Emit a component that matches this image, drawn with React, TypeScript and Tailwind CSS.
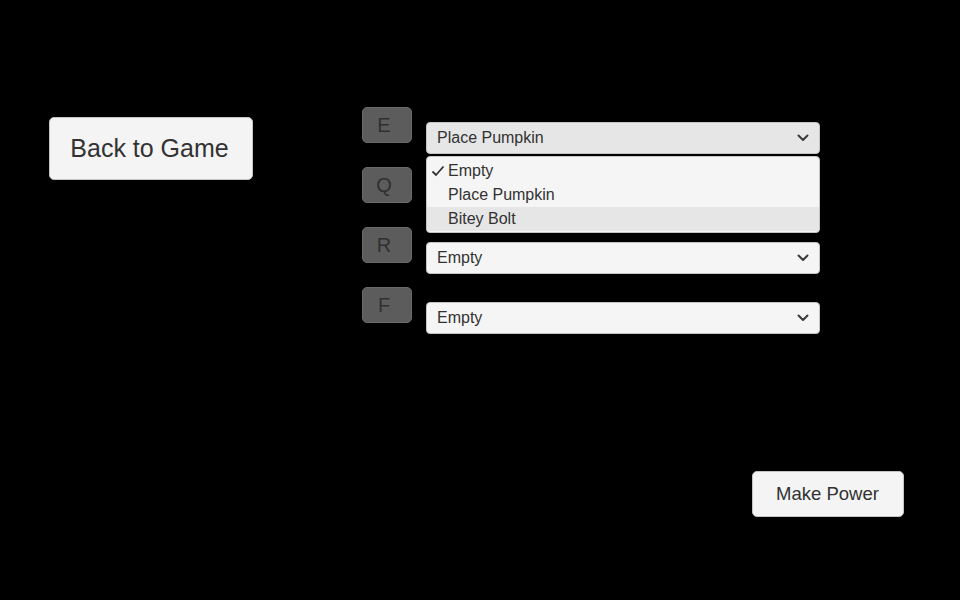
import React from "react";

const KEYS = [
  { key: "E", value: "Place Pumpkin", open: true },
  { key: "Q", value: "Empty", open: false },
  { key: "R", value: "Empty", open: false },
  { key: "F", value: "Empty", open: false },
];

const OPTIONS = ["Empty", "Place Pumpkin", "Bitey Bolt"];

function Chevron() {
  return (
    <svg width="12" height="8" viewBox="0 0 12 8" className="shrink-0">
      <path d="M1.5 1.5 L6 6 L10.5 1.5" fill="none" stroke="#3a3a3a" strokeWidth="2" strokeLinecap="round" strokeLinejoin="round" />
    </svg>
  );
}

function Dropdown({ value, open }: { value: string; open: boolean }) {
  return (
    <div className="relative mt-[15px] w-[394px]">
      <div
        className={`flex h-8 items-center justify-between rounded-[4px] border border-[#c4c4c4] pl-[10px] pr-[10px] text-[16px] text-[#323232] ${
          open ? "bg-[#e6e6e6]" : "bg-[#f5f5f5]"
        }`}
      >
        <span>{value}</span>
        <Chevron />
      </div>
      {open && (
        <div className="absolute left-0 right-0 top-[34px] z-10 rounded-[4px] border border-[#c4c4c4] bg-[#f5f5f5] pt-[2px] pb-[1px] text-[16px] text-[#323232]">
          {OPTIONS.map((opt, i) => (
            <div
              key={opt}
              className={`flex h-6 items-center ${i === 2 ? "bg-[#e6e6e6]" : ""}`}
            >
              <span className="flex w-[21px] justify-end pr-[3px]">
                {opt === "Empty" && (
                  <svg width="14" height="12" viewBox="0 0 14 12">
                    <path d="M1.5 6.5 L5 10 L12.5 1.5" fill="none" stroke="#323232" strokeWidth="1.8" />
                  </svg>
                )}
              </span>
              <span>{opt}</span>
            </div>
          ))}
        </div>
      )}
    </div>
  );
}

export default function App() {
  return (
    <div
      className="flex h-[600px] w-[960px] flex-col bg-black pt-[107px]"
      style={{ fontFamily: '"Liberation Sans", Arial, sans-serif' }}
    >
      <div className="flex items-start">
        <button className="ml-[49px] mt-[10px] flex h-[63px] w-[204px] items-center justify-center rounded-[5px] border border-[#c4c4c4] bg-[#f4f4f4] pr-[3px] text-[25px] text-[#323232]">
          Back to Game
        </button>
        <div className="ml-[109px] flex flex-col">
          {KEYS.map((k) => (
            <div key={k.key} className="flex h-[60px] items-start">
              <div className="flex h-9 w-[50px] items-center justify-center rounded-[5px] border border-[#6a6a6a] bg-[#5c5c5c] pr-[6px] text-[20px] text-[#303030]">
                {k.key}
              </div>
              <div className="ml-[14px]">
                <Dropdown value={k.value} open={k.open} />
              </div>
            </div>
          ))}
        </div>
      </div>
      <div className="mt-[124px] flex justify-end pr-[56px]">
        <button className="flex h-[46px] w-[152px] items-center justify-center rounded-[5px] border border-[#c4c4c4] bg-[#f4f4f4] pr-[1px] text-[18.5px] text-[#323232]">
          Make Power
        </button>
      </div>
    </div>
  );
}
